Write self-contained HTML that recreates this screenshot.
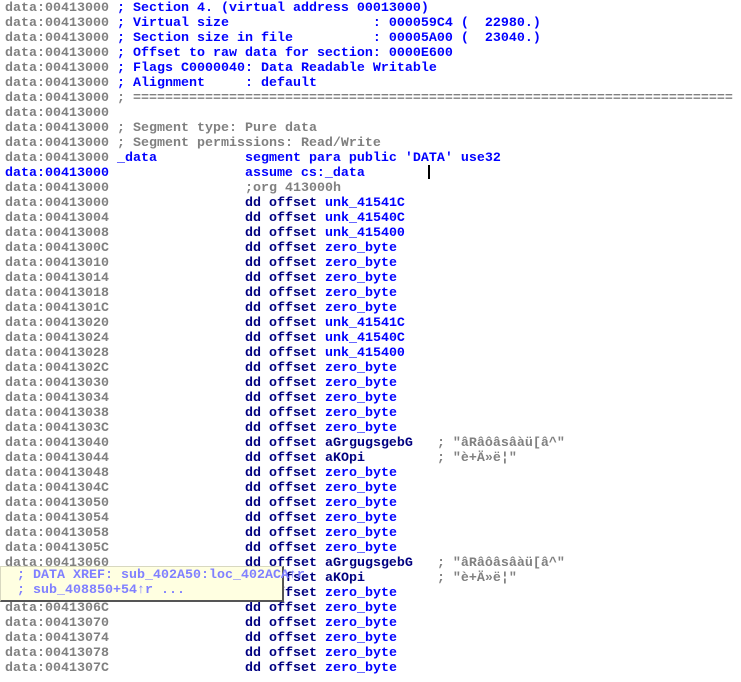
<!DOCTYPE html>
<html><head><meta charset="utf-8"><style>
html,body{margin:0;padding:0;background:#fff;width:741px;height:682px;overflow:hidden}
#c{position:absolute;left:5px;top:1px;font-family:"Liberation Mono",monospace;font-size:13.33px;font-weight:bold;white-space:pre;line-height:15px}
.a{color:#808080}.b{color:#0000ff}.n{color:#000080}.g{color:#808080}
.cur{position:absolute;left:428px;top:165px;width:2px;height:14px;background:#000}
.tip{position:absolute;left:0;top:566px;width:281px;height:32px;background:#ffffe1;border:1px solid #d8d8c0;border-right:2px solid #555;border-bottom:2px solid #555;font-family:"Liberation Mono",monospace;font-size:13.33px;font-weight:bold;white-space:pre;line-height:15px;color:#8080ff;padding:1px 0 0 0}
</style></head><body><div id="c"><div><span class="a">data:00413000</span> <span class="b">; Section 4. (virtual address 00013000)</span></div><div><span class="a">data:00413000</span> <span class="b">; Virtual size                  : 000059C4 (  22980.)</span></div><div><span class="a">data:00413000</span> <span class="b">; Section size in file          : 00005A00 (  23040.)</span></div><div><span class="a">data:00413000</span> <span class="b">; Offset to raw data for section: 0000E600</span></div><div><span class="a">data:00413000</span> <span class="b">; Flags C0000040: Data Readable Writable</span></div><div><span class="a">data:00413000</span> <span class="b">; Alignment     : default</span></div><div><span class="a">data:00413000</span> <span class="g">; ===========================================================================</span></div><div><span class="a">data:00413000</span></div><div><span class="a">data:00413000</span> <span class="g">; Segment type: Pure data</span></div><div><span class="a">data:00413000</span> <span class="g">; Segment permissions: Read/Write</span></div><div><span class="a">data:00413000</span> <span class="b">_data           segment para public 'DATA' use32</span></div><div><span class="b">data:00413000                 assume cs:_data</span></div><div><span class="a">data:00413000</span>                 <span class="g">;org 413000h</span></div><div><span class="a">data:00413000</span>                 <span class="n">dd offset</span> <span class="b">unk_41541C</span></div><div><span class="a">data:00413004</span>                 <span class="n">dd offset</span> <span class="b">unk_41540C</span></div><div><span class="a">data:00413008</span>                 <span class="n">dd offset</span> <span class="b">unk_415400</span></div><div><span class="a">data:0041300C</span>                 <span class="n">dd offset</span> <span class="b">zero_byte</span></div><div><span class="a">data:00413010</span>                 <span class="n">dd offset</span> <span class="b">zero_byte</span></div><div><span class="a">data:00413014</span>                 <span class="n">dd offset</span> <span class="b">zero_byte</span></div><div><span class="a">data:00413018</span>                 <span class="n">dd offset</span> <span class="b">zero_byte</span></div><div><span class="a">data:0041301C</span>                 <span class="n">dd offset</span> <span class="b">zero_byte</span></div><div><span class="a">data:00413020</span>                 <span class="n">dd offset</span> <span class="b">unk_41541C</span></div><div><span class="a">data:00413024</span>                 <span class="n">dd offset</span> <span class="b">unk_41540C</span></div><div><span class="a">data:00413028</span>                 <span class="n">dd offset</span> <span class="b">unk_415400</span></div><div><span class="a">data:0041302C</span>                 <span class="n">dd offset</span> <span class="b">zero_byte</span></div><div><span class="a">data:00413030</span>                 <span class="n">dd offset</span> <span class="b">zero_byte</span></div><div><span class="a">data:00413034</span>                 <span class="n">dd offset</span> <span class="b">zero_byte</span></div><div><span class="a">data:00413038</span>                 <span class="n">dd offset</span> <span class="b">zero_byte</span></div><div><span class="a">data:0041303C</span>                 <span class="n">dd offset</span> <span class="b">zero_byte</span></div><div><span class="a">data:00413040</span>                 <span class="n">dd offset aGrgugsgebG</span>   <span class="g">; "âRâôâsâàü[â^"</span></div><div><span class="a">data:00413044</span>                 <span class="n">dd offset aKOpi</span>         <span class="g">; "è+Ä»ë¦"</span></div><div><span class="a">data:00413048</span>                 <span class="n">dd offset</span> <span class="b">zero_byte</span></div><div><span class="a">data:0041304C</span>                 <span class="n">dd offset</span> <span class="b">zero_byte</span></div><div><span class="a">data:00413050</span>                 <span class="n">dd offset</span> <span class="b">zero_byte</span></div><div><span class="a">data:00413054</span>                 <span class="n">dd offset</span> <span class="b">zero_byte</span></div><div><span class="a">data:00413058</span>                 <span class="n">dd offset</span> <span class="b">zero_byte</span></div><div><span class="a">data:0041305C</span>                 <span class="n">dd offset</span> <span class="b">zero_byte</span></div><div><span class="a">data:00413060</span>                 <span class="n">dd offset aGrgugsgebG</span>   <span class="g">; "âRâôâsâàü[â^"</span></div><div><span class="a">data:00413064</span>                 <span class="n">dd offset aKOpi</span>         <span class="g">; "è+Ä»ë¦"</span></div><div><span class="a">data:00413068</span>                 <span class="n">dd offset</span> <span class="b">zero_byte</span></div><div><span class="a">data:0041306C</span>                 <span class="n">dd offset</span> <span class="b">zero_byte</span></div><div><span class="a">data:00413070</span>                 <span class="n">dd offset</span> <span class="b">zero_byte</span></div><div><span class="a">data:00413074</span>                 <span class="n">dd offset</span> <span class="b">zero_byte</span></div><div><span class="a">data:00413078</span>                 <span class="n">dd offset</span> <span class="b">zero_byte</span></div><div><span class="a">data:0041307C</span>                 <span class="n">dd offset</span> <span class="b">zero_byte</span></div></div>
<div class="cur"></div>
<div class="tip">  ; DATA XREF: sub_402A50:loc_402ACA↑r
  ; sub_408850+54↑r ...</div>
</body></html>
